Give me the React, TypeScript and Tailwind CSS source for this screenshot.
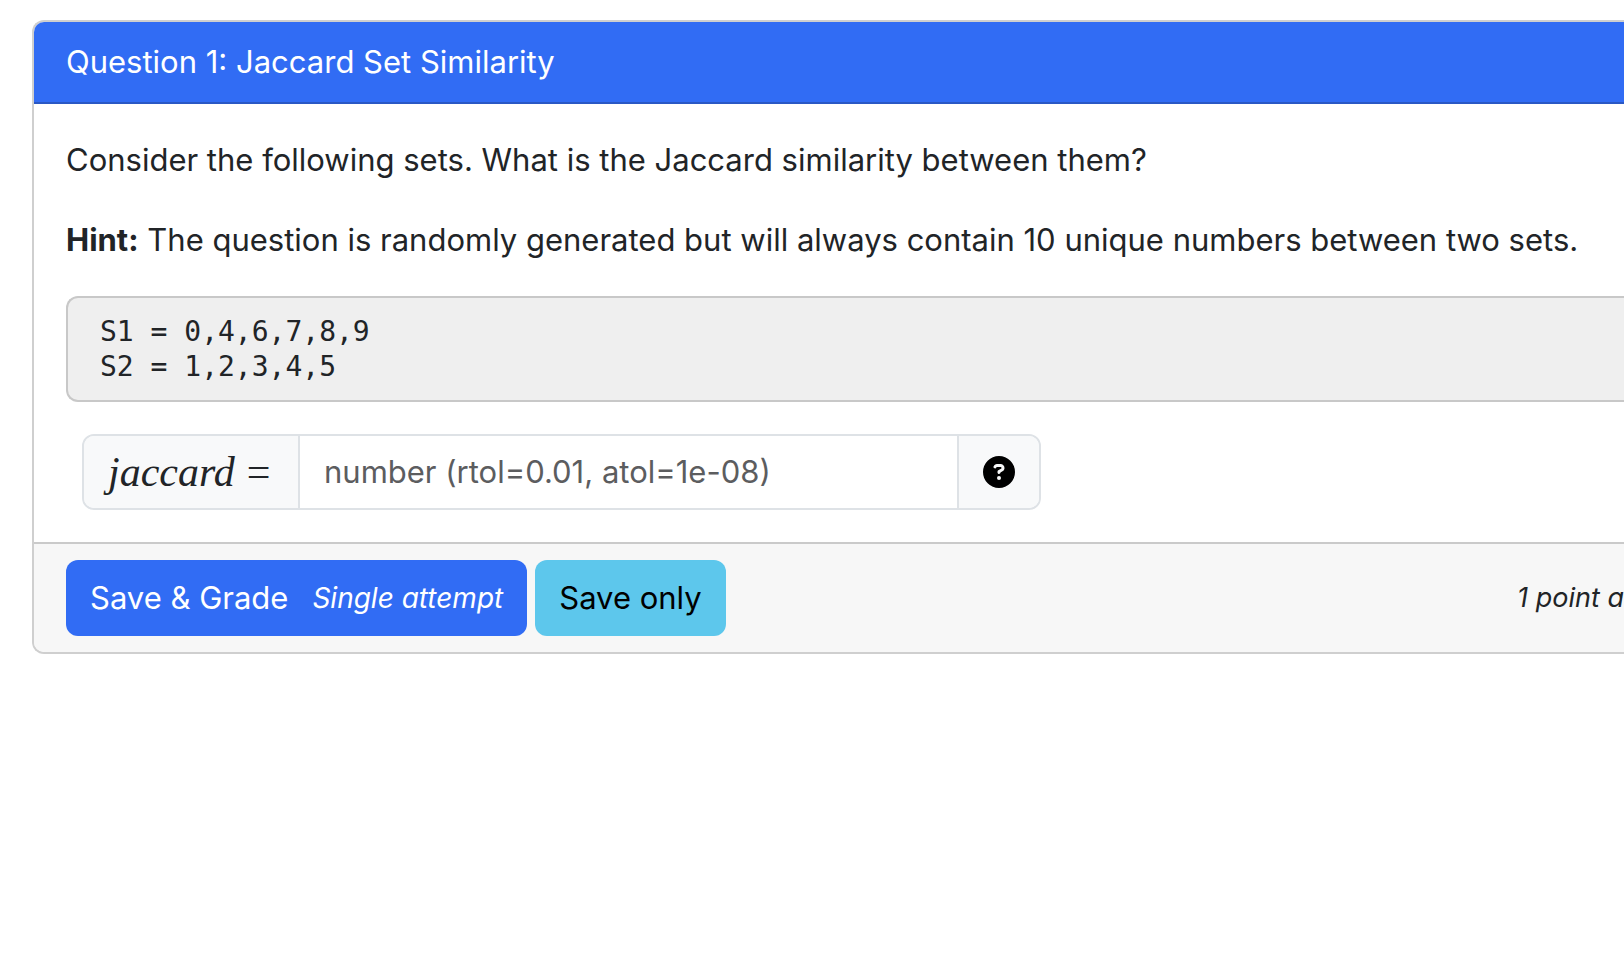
import React from "react";
import { FaCircleQuestion } from "react-icons/fa6";

const sets = ["S1 = 0,4,6,7,8,9", "S2 = 1,2,3,4,5"];

function AnswerField() {
  return (
    <div className="ml-4 flex h-[76px] w-full max-w-[959px] overflow-hidden rounded-xl border-2 border-[#dee2e6] bg-white">
      <label
        htmlFor="jaccard"
        className="flex w-[216px] shrink-0 items-center gap-3 border-r-2 border-[#dee2e6] bg-[#f8f9fa] pl-6 font-['Liberation_Serif',serif] text-[42px] leading-none"
      >
        <i>jaccard</i>
        <span>=</span>
      </label>
      <input
        id="jaccard"
        type="text"
        placeholder="number (rtol=0.01, atol=1e-08)"
        className="min-w-0 flex-1 px-6 text-[31px] outline-none placeholder:text-[#5c5d5f]"
      />
      <button
        type="button"
        aria-label="Help"
        className="flex w-[82px] shrink-0 items-center justify-center border-l-2 border-[#dee2e6] bg-[#f8f9fa] text-black"
      >
        <FaCircleQuestion className="size-8" />
      </button>
    </div>
  );
}

export default function App() {
  return (
    <main className="min-h-screen bg-white pt-5 pl-8 font-['Inter',sans-serif] text-[31px] leading-[48px] text-[#212427]">
      <section className="overflow-hidden rounded-l-xl border-2 border-r-0 border-[#cfcfcf] bg-white">
        <h1 className="border-b-2 border-[#2a58c4] bg-[#316cf4] px-8 py-4 text-white">
          Question 1: Jaccard Set Similarity
        </h1>

        <div className="flex flex-col gap-8 py-8 pl-8">
          <p>Consider the following sets. What is the Jaccard similarity between them?</p>
          <p>
            <strong className="font-bold">Hint:</strong> The question is randomly generated but will
            always contain 10 unique numbers between two sets.
          </p>
          <pre className="rounded-l-xl border-2 border-r-0 border-[#c8c8c8] bg-[#efefef] px-8 py-4 font-['DejaVu_Sans_Mono',monospace] text-[28px] leading-[35px]">
            {sets.join("\n")}
          </pre>
          <AnswerField />
        </div>

        <footer className="flex items-center justify-between border-t-2 border-[#cacaca] bg-[#f7f7f7] py-4 pl-8">
          <div className="flex gap-2">
            <button
              type="button"
              className="flex h-[76px] items-center gap-6 rounded-xl bg-[#316cf4] px-6 text-white"
            >
              Save &amp; Grade
              <i className="text-[28px]">Single attempt</i>
            </button>
            <button type="button" className="h-[76px] rounded-xl bg-[#5dc7ec] px-6 text-black">
              Save only
            </button>
          </div>
          <i className="text-[27px] whitespace-nowrap">1 point a</i>
        </footer>
      </section>
    </main>
  );
}
